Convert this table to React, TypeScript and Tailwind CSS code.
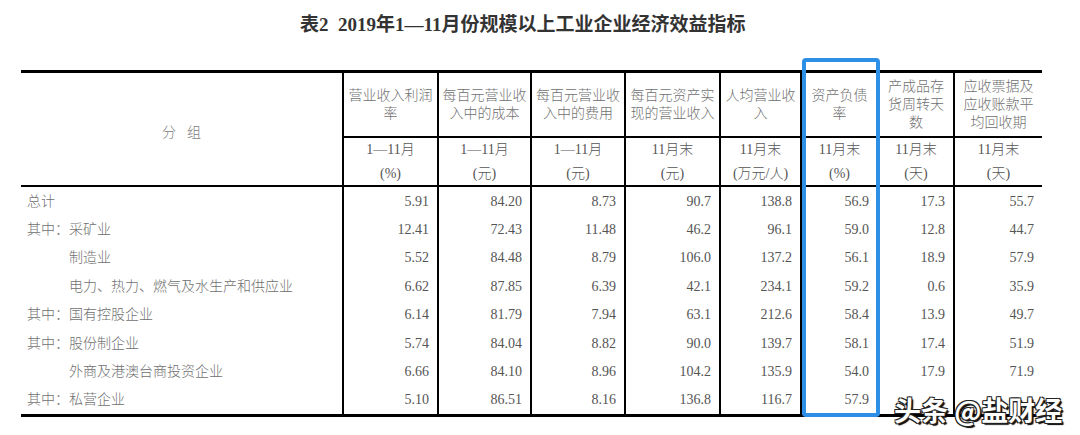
import React from "react";

const FONT = "font-['Liberation_Serif','Noto_Sans_CJK_SC',serif]";
const GRID = "grid grid-cols-[321px_95px_93px_94px_95px_81px_77px_76px_89px]";

const headers: string[][] = [
  ["营业收入利润", "率"],
  ["每百元营业收", "入中的成本"],
  ["每百元营业收", "入中的费用"],
  ["每百元资产实", "现的营业收入"],
  ["人均营业收", "入"],
  ["资产负债", "率"],
  ["产成品存", "货周转天", "数"],
  ["应收票据及", "应收账款平", "均回收期"],
];

const sub: [string, string][] = [
  ["1—11月", "(%)"],
  ["1—11月", "(元)"],
  ["1—11月", "(元)"],
  ["11月末", "(元)"],
  ["11月末", "(万元/人)"],
  ["11月末", "(%)"],
  ["11月末", "(天)"],
  ["11月末", "(天)"],
];

const rows: { label: string; indent: boolean; vals: string[] }[] = [
  { label: "总计", indent: false, vals: ["5.91", "84.20", "8.73", "90.7", "138.8", "56.9", "17.3", "55.7"] },
  { label: "其中：采矿业", indent: false, vals: ["12.41", "72.43", "11.48", "46.2", "96.1", "59.0", "12.8", "44.7"] },
  { label: "制造业", indent: true, vals: ["5.52", "84.48", "8.79", "106.0", "137.2", "56.1", "18.9", "57.9"] },
  { label: "电力、热力、燃气及水生产和供应业", indent: true, vals: ["6.62", "87.85", "6.39", "42.1", "234.1", "59.2", "0.6", "35.9"] },
  { label: "其中：国有控股企业", indent: false, vals: ["6.14", "81.79", "7.94", "63.1", "212.6", "58.4", "13.9", "49.7"] },
  { label: "其中：股份制企业", indent: false, vals: ["5.74", "84.04", "8.82", "90.0", "139.7", "58.1", "17.4", "51.9"] },
  { label: "外商及港澳台商投资企业", indent: true, vals: ["6.66", "84.10", "8.96", "104.2", "135.9", "54.0", "17.9", "71.9"] },
  { label: "其中：私营企业", indent: false, vals: ["5.10", "86.51", "8.16", "136.8", "116.7", "57.9", "", ""] },
];

export default function App() {
  return (
    <div className={`relative w-[1080px] h-[435px] overflow-hidden bg-white ${FONT}`}>
      <div className="pt-[12px] pl-[300px] text-[19px] leading-[26px] font-bold text-[#333] whitespace-nowrap">
        表2&nbsp;&nbsp;2019年1—11月份规模以上工业企业经济效益指标
      </div>

      <div className="mt-[32px] ml-[21px] w-[1021px] border-t-[3px] border-b-[3px] border-black text-[14px] font-light text-[#707070]">
        {/* header */}
        <div className={`${GRID} grid-rows-[65px_47px] border-b-2 border-black`}>
          <div className="row-span-2 flex items-center justify-center pt-[6px] gap-[11px] text-[#808080]">
            <span>分</span>
            <span>组</span>
          </div>
          {headers.map((h, i) => (
            <div
              key={i}
              className="border-l-2 border-b-2 border-black flex flex-col items-center justify-center leading-[18px] whitespace-nowrap pt-[1px]"
            >
              {h.map((l, j) => (
                <span key={j}>{l}</span>
              ))}
            </div>
          ))}
          {sub.map((s, i) => (
            <div
              key={i}
              className="border-l-2 border-black flex flex-col items-center justify-center leading-[24px] whitespace-nowrap text-[#555]"
            >
              <span>{s[0]}</span>
              <span>{s[1]}</span>
            </div>
          ))}
        </div>

        {/* body */}
        <div>
          {rows.map((r, i) => (
            <div key={i} className={`${GRID} h-[28.4px]`}>
              <div className={`flex items-center whitespace-nowrap ${r.indent ? "pl-[48px]" : "pl-[6px]"}`}>
                {r.label}
              </div>
              {r.vals.map((v, j) => (
                <div key={j} className="border-l-2 border-black flex items-center justify-end pr-[8px] text-[#555]">
                  {v}
                </div>
              ))}
            </div>
          ))}
        </div>
      </div>

      {/* highlight box */}
      <div className="absolute left-[802px] top-[58px] w-[78px] h-[359px] border-4 border-[#2d8fe5] rounded-[4px]" />

      {/* watermark */}
      <div className="absolute left-[894px] top-[394px] text-[27px] leading-[32px] font-bold text-white whitespace-nowrap font-['Noto_Sans_CJK_SC',sans-serif] [text-shadow:1px_1px_0_#222,-1px_-1px_0_#222,1px_-1px_0_#222,-1px_1px_0_#222,2px_2px_1px_#000]">
        头条 @盐财经
      </div>
    </div>
  );
}
